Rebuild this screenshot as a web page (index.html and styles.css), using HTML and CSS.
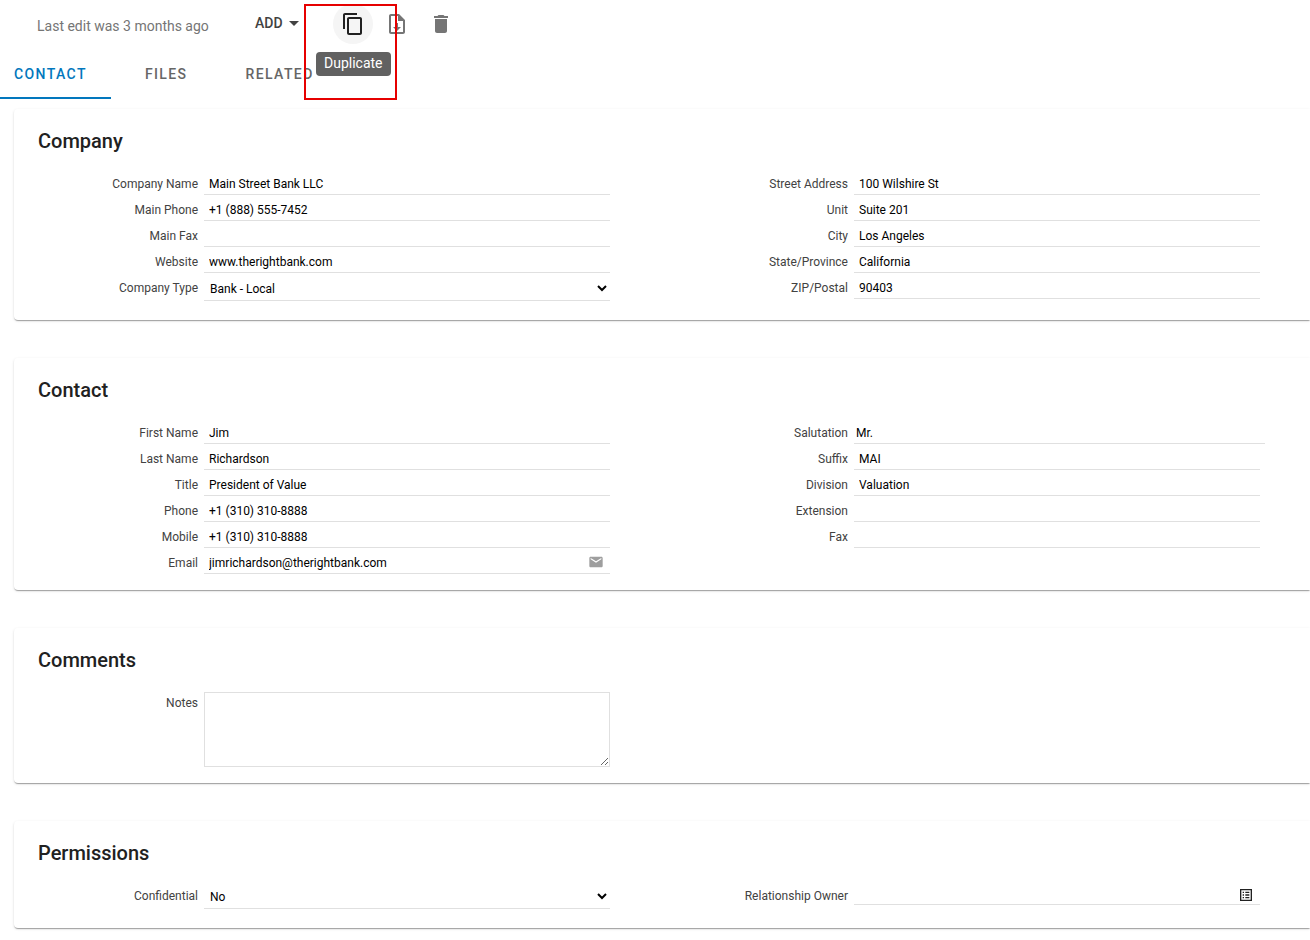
FILE: index.html
```html
<!DOCTYPE html>
<html lang="en">
<head>
    <meta charset="UTF-8">
    <meta name="viewport" content="width=device-width, initial-scale=1.0">
    <title>Main Street Bank LLC</title>
    <link rel="stylesheet" href="styles.css">
</head>
<body>
    <!-- Toolbar -->
    <header class="toolbar">
        <span class="last-edit">Last edit was 3 months ago</span>
        <button type="button" class="add-btn">ADD
            <svg width="10" height="5" viewBox="0 0 10 5"><path d="M0 0h10L5 5z" fill="currentColor"/></svg>
        </button>
        <div class="duplicate">
            <button type="button" class="icon-btn active" aria-label="Duplicate">
                <svg width="24" height="24" viewBox="0 0 24 24"><path fill="currentColor" d="M16 1H4c-1.100 0-2 .9-2 2v14h2V3h12V1zm3 4H8c-1.100 0-2 .9-2 2v14c0 1.100.9 2 2 2h11c1.100 0 2-.9 2-2V7c0-1.100-.9-2-2-2zm0 16H8V7h11v14z"/></svg>
            </button>
            <div class="tooltip" role="tooltip">Duplicate</div>
            <div class="highlight"></div>
        </div>
        <button type="button" class="icon-btn" aria-label="Export">
            <svg width="24" height="24" viewBox="0 0 24 24"><path fill="currentColor" d="M14 2H6c-1.100 0-2 .9-2 2v16c0 1.100.9 2 2 2h12c1.100 0 2-.9 2-2V8l-6-6zm4 18H6V4h7v5h5v11zM11 11h2v4h3l-4 4-4-4h3z"/></svg>
        </button>
        <button type="button" class="icon-btn" aria-label="Delete">
            <svg width="24" height="24" viewBox="0 0 24 24"><path fill="currentColor" d="M6 19c0 1.100.9 2 2 2h8c1.100 0 2-.9 2-2V7H6v12zM19 4h-3.500l-1-1h-5l-1 1H5v2h14V4z"/></svg>
        </button>
    </header>

    <!-- Tabs -->
    <nav class="tabs">
        <a href="#contact" class="tab selected">CONTACT</a>
        <a href="#files" class="tab">FILES</a>
        <a href="#related" class="tab">RELATED</a>
    </nav>

    <main>
        <section class="card">
            <h2>Company</h2>
            <div class="columns">
                <div class="column">
                    <div class="row"><label for="company-name">Company Name</label><input type="text" id="company-name" value="Main Street Bank LLC"></div>
                    <div class="row"><label for="main-phone">Main Phone</label><input type="text" id="main-phone" value="+1 (888) 555-7452"></div>
                    <div class="row"><label for="main-fax">Main Fax</label><input type="text" id="main-fax"></div>
                    <div class="row"><label for="website">Website</label><input type="text" id="website" value="www.therightbank.com"></div>
                    <div class="row select-row">
                        <label for="company-type">Company Type</label>
                        <select id="company-type">
                            <option>Bank - Local</option>
                        </select>
                    </div>
                </div>
                <div class="column">
                    <div class="row"><label for="street">Street Address</label><input type="text" id="street" value="100 Wilshire St"></div>
                    <div class="row"><label for="unit">Unit</label><input type="text" id="unit" value="Suite 201"></div>
                    <div class="row"><label for="city">City</label><input type="text" id="city" value="Los Angeles"></div>
                    <div class="row"><label for="state">State/Province</label><input type="text" id="state" value="California"></div>
                    <div class="row"><label for="zip">ZIP/Postal</label><input type="text" id="zip" value="90403"></div>
                </div>
            </div>
        </section>

        <section class="card">
            <h2>Contact</h2>
            <div class="columns">
                <div class="column">
                    <div class="row"><label for="first-name">First Name</label><input type="text" id="first-name" value="Jim"></div>
                    <div class="row"><label for="last-name">Last Name</label><input type="text" id="last-name" value="Richardson"></div>
                    <div class="row"><label for="job-title">Title</label><input type="text" id="job-title" value="President of Value"></div>
                    <div class="row"><label for="phone">Phone</label><input type="text" id="phone" value="+1 (310) 310-8888"></div>
                    <div class="row"><label for="mobile">Mobile</label><input type="text" id="mobile" value="+1 (310) 310-8888"></div>
                    <div class="row">
                        <label for="email">Email</label>
                        <div class="input-group">
                            <input type="text" id="email" value="jimrichardson@therightbank.com">
                            <button type="button" class="field-btn mail" aria-label="Send email">
                                <svg width="16" height="16" viewBox="0 0 24 24"><path fill="currentColor" d="M20 4H4c-1.100 0-2 .9-2 2v12c0 1.100.9 2 2 2h16c1.100 0 2-.9 2-2V6c0-1.100-.9-2-2-2zm0 4l-8 5-8-5V6l8 5 8-5v2z"/></svg>
                            </button>
                        </div>
                    </div>
                </div>
                <div class="column">
                    <div class="row"><label for="salutation">Salutation</label><input type="text" id="salutation" class="combo" value="Mr."></div>
                    <div class="row"><label for="suffix">Suffix</label><input type="text" id="suffix" value="MAI"></div>
                    <div class="row"><label for="division">Division</label><input type="text" id="division" value="Valuation"></div>
                    <div class="row"><label for="extension">Extension</label><input type="text" id="extension"></div>
                    <div class="row"><label for="fax">Fax</label><input type="text" id="fax"></div>
                </div>
            </div>
        </section>

        <section class="card">
            <h2>Comments</h2>
            <div class="columns">
                <div class="column">
                    <div class="row notes-row"><label for="notes">Notes</label><textarea id="notes"></textarea></div>
                </div>
            </div>
        </section>

        <section class="card">
            <h2>Permissions</h2>
            <div class="columns">
                <div class="column">
                    <div class="row select-row">
                        <label for="confidential">Confidential</label>
                        <select id="confidential">
                            <option>No</option>
                            <option>Yes</option>
                        </select>
                    </div>
                </div>
                <div class="column">
                    <div class="row">
                        <label for="owner">Relationship Owner</label>
                        <div class="input-group picker">
                            <input type="text" id="owner">
                            <button type="button" class="field-btn" aria-label="Choose owner">
                                <svg width="16" height="16" viewBox="0 0 24 24"><path fill="currentColor" d="M3 3v18h18V3H3zm16 16H5V5h14v14zM11 7h6v2h-6zM11 11h6v2h-6zM11 15h6v2h-6zM7 7h2v2H7zM7 11h2v2H7zM7 15h2v2H7z"/></svg>
                            </button>
                        </div>
                    </div>
                </div>
            </div>
        </section>
    </main>
</body>
</html>
```

FILE: styles.css
```css
body {
    margin: 0;
    padding: 0 0 12px;
    font-family: Roboto, sans-serif;
    background-color: #fff;
    color: #212121;
}
button {
    border: none;
    background: none;
    padding: 0;
    font-family: inherit;
    cursor: pointer;
}
svg {
    display: block;
}
.toolbar {
    display: flex;
    align-items: center;
    height: 48px;
    padding-left: 37px;
}
.last-edit {
    width: 218px;
    padding-top: 4px;
    font-size: 14px;
    color: #757575;
}
.add-btn {
    display: flex;
    align-items: center;
    gap: 6px;
    width: 78px;
    padding-bottom: 2px;
    font-size: 14px;
    font-weight: 500;
    color: #424242;
}
.duplicate {
    position: relative;
}
.icon-btn {
    display: flex;
    align-items: center;
    justify-content: center;
    width: 44px;
    height: 40px;
    color: #757575;
}
.icon-btn.active {
    width: 40px;
    margin-right: 2px;
    border-radius: 50%;
    background-color: #f5f5f5;
    color: #212121;
}
.tooltip {
    position: absolute;
    top: 48px;
    left: -17px;
    padding: 0 8px 2px;
    border-radius: 4px;
    background-color: #616161;
    color: #fff;
    font-size: 14px;
    line-height: 22px;
    z-index: 1;
}
.highlight {
    position: absolute;
    top: 0;
    left: -29px;
    width: 89px;
    height: 92px;
    border: 2px solid #e60000;
    pointer-events: none;
}
.tabs {
    display: flex;
    gap: 10px;
    margin-bottom: 10px;
}
.tab {
    padding: 4px 24px 0;
    border-bottom: 2px solid transparent;
    color: #666;
    font-size: 14px;
    font-weight: 500;
    letter-spacing: 0.1em;
    line-height: 45px;
    text-decoration: none;
}
.tab.selected {
    padding-left: 14px;
    border-bottom-color: #0277bd;
    color: #0277bd;
}
main {
    display: flex;
    flex-direction: column;
    gap: 38px;
    padding-left: 14px;
}
.card {
    padding: 16px 50px 14px 24px;
    border-radius: 4px 0 0 4px;
    box-shadow: 0 2px 1px -1px rgba(0, 0, 0, 0.2), 0 1px 1px 0 rgba(0, 0, 0, 0.14), 0 1px 3px 0 rgba(0, 0, 0, 0.12);
}
.card h2 {
    margin: 0 0 14px;
    font-size: 20px;
    font-weight: 500;
    line-height: 32px;
}
.columns {
    display: grid;
    grid-template-columns: 1fr 1fr;
    gap: 78px;
}
.row {
    display: grid;
    grid-template-columns: 160px 1fr;
    gap: 6px;
    align-items: start;
    height: 26px;
    font-size: 12px;
}
.row label {
    color: #424242;
    line-height: 26px;
    text-align: right;
}
.row input,
.row select {
    box-sizing: border-box;
    width: 100%;
    height: 24px;
    padding: 2px 5px 0;
    border: none;
    border-bottom: 1px solid #e0e0e0;
    border-radius: 0;
    background-color: transparent;
    color: #000;
    font-family: inherit;
    font-size: 12px;
    outline: none;
}
.select-row {
    height: 31px;
}
.row select {
    height: 26px;
    padding: 3px 2px 0;
}
.row .combo {
    width: calc(100% + 5px);
    padding-left: 2px;
}
.input-group {
    display: flex;
    position: relative;
}
.picker input {
    height: 22px;
}
.field-btn {
    position: absolute;
    right: 6px;
    top: 4px;
    color: #212121;
}
.field-btn.mail {
    color: #9e9e9e;
}
.notes-row {
    height: 79px;
}
.row textarea {
    box-sizing: border-box;
    width: 100%;
    height: 75px;
    margin-top: 2px;
    padding: 4px;
    border: 1px solid #e0e0e0;
    font-family: inherit;
    font-size: 12px;
    outline: none;
}
```
